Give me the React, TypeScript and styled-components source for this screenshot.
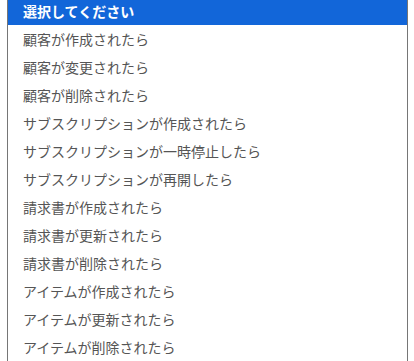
import React from 'react';
import styled, { createGlobalStyle } from 'styled-components';

const GlobalStyle = createGlobalStyle`
  html, body {
    margin: 0;
    padding: 0;
    background: #ffffff;
    overflow: hidden;
  }
`;

const Page = styled.div`
  padding: 0 6px 0 7px;
`;

// scrolled listbox: top edge sits just above the viewport
const ListBox = styled.ul`
  list-style: none;
  margin: -4px 0 0 0;
  padding: 0;
  border: 1px solid #767676;
  background: #ffffff;
  font-family: "Noto Sans CJK JP", "Noto Sans", sans-serif;
  font-size: 14px;
`;

const Option = styled.li<{ $selected?: boolean }>`
  height: 28px;
  box-sizing: border-box;
  display: flex;
  align-items: center;
  padding: 0 14px 1px 15px;
  color: ${(p) => (p.$selected ? '#ffffff' : '#555555')};
  background: ${(p) => (p.$selected ? '#1266d9' : 'transparent')};
  font-weight: ${(p) => (p.$selected ? 700 : 400)};
  white-space: nowrap;
`;

const options = [
  '選択してください',
  '顧客が作成されたら',
  '顧客が変更されたら',
  '顧客が削除されたら',
  'サブスクリプションが作成されたら',
  'サブスクリプションが一時停止したら',
  'サブスクリプションが再開したら',
  '請求書が作成されたら',
  '請求書が更新されたら',
  '請求書が削除されたら',
  'アイテムが作成されたら',
  'アイテムが更新されたら',
  'アイテムが削除されたら',
];

const App: React.FC = () => {
  return (
    <>
      <GlobalStyle />
      <Page>
        <ListBox>
          {options.map((label, i) => (
            <Option key={label} $selected={i === 0}>
              {label}
            </Option>
          ))}
        </ListBox>
      </Page>
    </>
  );
};

export default App;
